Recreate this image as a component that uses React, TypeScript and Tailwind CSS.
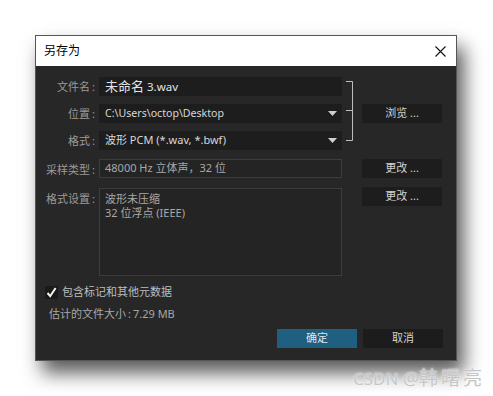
import React from "react";

const font = { fontFamily: '"Noto Sans", "Noto Sans CJK SC", sans-serif' };

function Triangle() {
  return (
    <svg width="9" height="5" viewBox="0 0 9 5" className="shrink-0">
      <path d="M0 0 H9 L4.5 5 Z" fill="#cfcfcf" />
    </svg>
  );
}

function Label({ children, className = "" }: { children: React.ReactNode; className?: string }) {
  return (
    <div className={"w-[61px] shrink-0 text-right text-[11px] leading-[14px] text-[#9a9a9a] pr-[2px] whitespace-nowrap " + className}>
      {children}
      <span className="ml-[2px]">:</span>
    </div>
  );
}

function Btn({ children, className = "" }: { children: React.ReactNode; className?: string }) {
  return (
    <div
      className={
        "w-[80px] h-[19px] shrink-0 flex items-center justify-center text-[11px] text-[#d2d2d2] bg-[#1d1d1d] " +
        className
      }
    >
      {children}
    </div>
  );
}

export default function App() {
  return (
    <div className="relative w-[493px] h-[396px] bg-white overflow-hidden" style={font}>
      <div className="pt-[35px] pl-[35px]">
        <div className="w-[422px] border border-[#555555] flex flex-col shadow-[7px_12px_18px_rgba(0,0,0,0.65)]">
          {/* title bar */}
          <div className="h-[30px] bg-white flex items-center justify-between pl-[8px] pr-[10px]">
            <span className="text-[12px] text-black">另存为</span>
            <svg width="11" height="11" viewBox="0 0 11 11">
              <path d="M0.5 0.5 L10.5 10.5 M10.5 0.5 L0.5 10.5" stroke="#111" strokeWidth="1.1" />
            </svg>
          </div>
          {/* body */}
          <div className="bg-[#272727] flex flex-col pt-[11px] pb-[12px]">
            {/* group 1 */}
            <div className="flex">
              <div className="flex flex-col gap-[8px]">
                <div className="flex items-center h-[19px]">
                  <Label>文件名</Label>
                  <div className="ml-[2px] w-[243px] h-[19px] bg-[#1d1d1d] flex items-center pl-[6px]">
                    <span className="text-[13px] text-[#e4e4e4]">未命名</span>
                    <span className="text-[11.5px] text-[#e4e4e4] ml-[3px]">3.wav</span>
                  </div>
                </div>
                <div className="flex items-center h-[19px]">
                  <Label>位置</Label>
                  <div className="ml-[2px] w-[243px] h-[19px] bg-[#1d1d1d] flex items-center justify-between pl-[6px] pr-[5px]">
                    <span className="text-[10.6px] text-[#d8d8d8]">C:\Users\octop\Desktop</span>
                    <Triangle />
                  </div>
                </div>
                <div className="flex items-center h-[19px]">
                  <Label>格式</Label>
                  <div className="ml-[2px] w-[243px] h-[19px] bg-[#1d1d1d] flex items-center justify-between pl-[6px] pr-[5px]">
                    <span className="text-[11px] text-[#d8d8d8]">波形 PCM (*.wav, *.bwf)</span>
                    <Triangle />
                  </div>
                </div>
              </div>
              <div className="w-[20px] shrink-0">
                <svg width="20" height="73" viewBox="0 0 20 73">
                  <path d="M4 4.5 H10.5 V63.5 H4 M4 33.5 H10.5" stroke="#bdbdbd" strokeWidth="1" fill="none" />
                </svg>
              </div>
              <div className="flex items-center">
                <Btn>浏览 ...</Btn>
              </div>
            </div>
            {/* row 4 */}
            <div className="flex items-center mt-[9px]">
              <Label className="pt-[3px]">采样类型</Label>
              <div className="ml-[2px] w-[243px] h-[19px] bg-[#242424] border border-[#3c3c3c] flex items-center pl-[5px]">
                <span className="text-[11px] text-[#a8a8a8]">48000 Hz 立体声，32 位</span>
              </div>
              <div className="w-[20px] shrink-0" />
              <Btn>更改 ...</Btn>
            </div>
            {/* row 5 */}
            <div className="flex items-start mt-[10px]">
              <Label className="pt-[4px]">格式设置</Label>
              <div className="ml-[2px] w-[243px] h-[88px] bg-[#242424] border border-[#3c3c3c] flex flex-col pl-[5px] pt-[3px] text-[11px] leading-[14px] text-[#a8a8a8]">
                <span>波形未压缩</span>
                <span>32 位浮点 (IEEE)</span>
              </div>
              <div className="w-[20px] shrink-0" />
              <Btn className="-mt-[1px]">更改 ...</Btn>
            </div>
            {/* checkbox */}
            <div className="flex items-center mt-[10px] pl-[9px] h-[13px]">
              <div className="w-[13px] h-[13px] bg-[#1a1a1a] flex items-center justify-center">
                <svg width="11" height="11" viewBox="0 0 11 11">
                  <path d="M1.5 6 L4.2 9.2 L9.6 1" stroke="#f4f4f4" strokeWidth="2" fill="none" />
                </svg>
              </div>
              <span className="ml-[4px] text-[11px] text-[#bdbdbd]">包含标记和其他元数据</span>
            </div>
            {/* size */}
            <div className="mt-[8px] pl-[13px] h-[14px] text-[11px] leading-[14px] text-[#a8a8a8] whitespace-nowrap">
              估计的文件大小<span className="mx-[2px]">:</span>7.29 MB
            </div>
            {/* buttons */}
            <div className="flex justify-end gap-[6px] mt-[8px] pr-[13px]">
              <div className="w-[80px] h-[19px] flex items-center justify-center bg-[#1f5f80] text-[11px] text-[#dce6ec]">
                确定
              </div>
              <div className="w-[80px] h-[19px] flex items-center justify-center bg-[#1c1c1c] text-[11px] text-[#d2d2d2]">
                取消
              </div>
            </div>
          </div>
        </div>
      </div>
      <div
        className="absolute left-[353px] top-[365px] text-[17px] leading-[26px] text-[#c6c6c6] whitespace-nowrap"
        style={{ textShadow: "0 0 2px #ffffff" }}
      >
        CSDN <span className="text-[18px]">@</span>
        <span className="text-[19px] tracking-[3px]">韩曙亮</span>
      </div>
    </div>
  );
}
